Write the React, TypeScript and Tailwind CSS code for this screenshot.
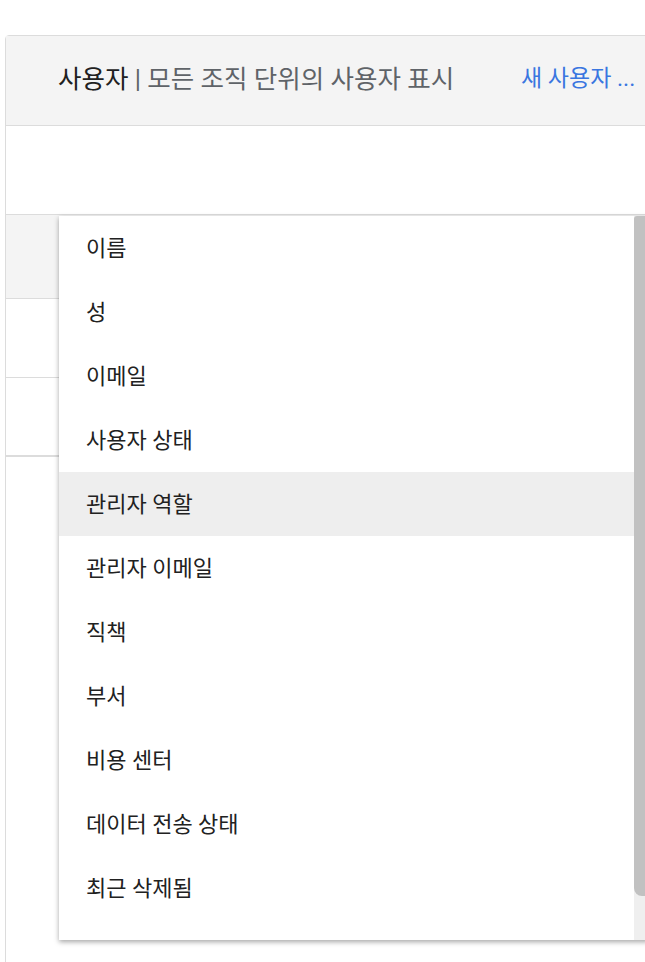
import React from "react";

const columns: string[] = [
    "이름",
    "성",
    "이메일",
    "사용자 상태",
    "관리자 역할",
    "관리자 이메일",
    "직책",
    "부서",
    "비용 센터",
    "데이터 전송 상태",
    "최근 삭제됨",
];

const font = { fontFamily: "Roboto, 'Noto Sans CJK KR', sans-serif" };

export default function App() {
    const active = "관리자 역할";
    return (
        <div className="relative w-[645px] h-[962px] overflow-hidden bg-white" style={font}>
            <div className="pt-[35px] pl-[5px]">
                {/* users card */}
                <div className="w-[700px] h-[1000px] border border-[#dcdcdc] rounded-tl-[4px]">
                    <div className="h-[90px] bg-[#f4f4f4] border-b border-[#dcdcdc] flex items-center pl-[52px] pb-[2px]">
                        <div className="w-[463px] text-[25.5px] text-[#212121] whitespace-nowrap">
                            사용자 <span className="text-[#5f6368]">| 모든 조직 단위의 사용자 표시</span>
                        </div>
                        <div className="text-[23px] text-[#3a76e0] whitespace-nowrap">새 사용자 ...</div>
                    </div>
                    <div className="h-[89px] border-b border-[#dcdcdc]"></div>
                    <div className="h-[84px] bg-[#f4f4f4] border-b border-[#dcdcdc]"></div>
                    <div className="h-[79px] border-b border-[#dcdcdc]"></div>
                    <div className="h-[79px] border-b-2 border-[#dcdcdc]"></div>
                </div>
            </div>

            {/* column picker menu */}
            <div className="absolute left-[59px] top-[216px] w-[590px] h-[724px] bg-white flex shadow-[0_2px_5px_rgba(0,0,0,0.35)]">
                <ul className="flex-1 pb-[20px]">
                    {columns.map((c) => (
                        <li
                            key={c}
                            className={`h-[64px] flex items-center pl-[27px] text-[22px] text-[#212121] ${c === active ? "bg-[#eeeeee]" : ""}`}
                        >
                            {c}
                        </li>
                    ))}
                </ul>
                <div className="w-[15px] h-full bg-[#efefef] flex flex-col">
                    <div className="h-[680px] bg-[#c1c1c1] rounded-tl-[3px] rounded-bl-[8px]"></div>
                </div>
            </div>
        </div>
    );
}
